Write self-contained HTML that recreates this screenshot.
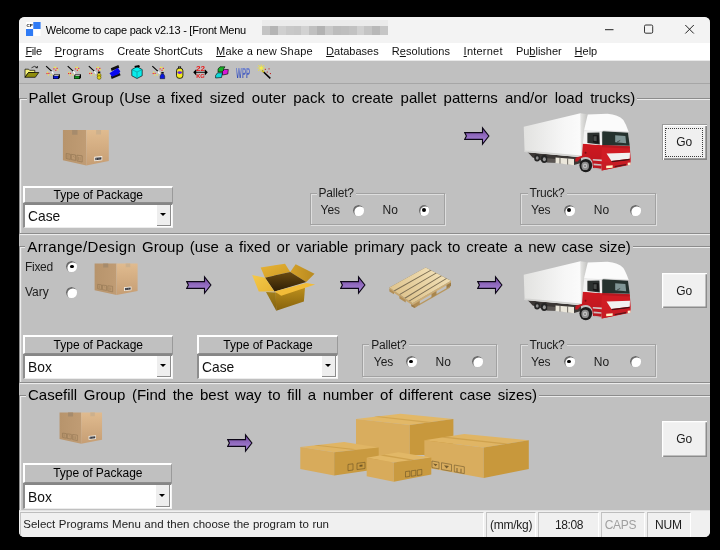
<!DOCTYPE html><html><head><meta charset="utf-8"><title>Welcome to cape pack v2.13</title><style>
*{box-sizing:border-box;margin:0;padding:0}
html,body{width:720px;height:550px;overflow:hidden;background:#000}
body{font-family:"Liberation Sans",sans-serif;color:#000;position:relative}
#win{will-change:transform;position:absolute;left:19px;top:16.8px;width:690.6px;height:519.5px;background:#c0c0c0;border-radius:5.5px;overflow:hidden}
.abs{position:absolute}
#title{left:0;top:0;width:691px;height:26px;background:#f3f3f3}
#menu{left:0;top:26px;width:691px;height:18px;background:#fff}
#tool{left:0;top:43.2px;width:691px;height:23.9px;background:#c0c0c0;border-top:1.6px solid #e9e9e9;border-bottom:1px solid #a6a6a6}
.t{position:absolute;white-space:nowrap;line-height:1}
.mi{font-size:11px;top:29.4px;color:#111}
.mi u{text-decoration:underline;text-underline-offset:1px}
.hd{font-size:15px;background:#c0c0c0;padding:0 2px 0 2px}
.frame{position:absolute;border:1px solid #a2a2a2;box-shadow:inset 1px 1px 0 #dedede, 1px 1px 0 #dedede}
.fm{border-color:#8c8c8c;box-shadow:inset 1.2px 1.1px 0 #ececec, 1px 1.1px 0 #ececec}
.btn{position:absolute;background:#c0c0c0;border-top:2px solid #fff;border-left:2px solid #fff;border-right:1px solid #9a9a9a;border-bottom:1px solid #8c8c8c;font-size:12px;text-align:center}
.combo{position:absolute;background:#fff;border-top:2px solid #868686;border-left:2px solid #8e8e8e;border-right:1px solid #f4f4f4;border-bottom:1px solid #ececec}
.combo .tx{position:absolute;left:3px;font-size:15px;line-height:1;transform:scaleX(0.92);transform-origin:0 0;color:#111}
.combo .dd{position:absolute;right:1px;top:0;bottom:1px;width:14px;background:#eee;border-right:1px solid #8c8c8c;border-bottom:1px solid #8c8c8c}
.combo .dd:after{content:"";position:absolute;left:3px;top:42%;border-left:3.3px solid transparent;border-right:3.3px solid transparent;border-top:3.5px solid #000}
.lb{font-size:12px;color:#1c1c1c}
.radio{position:absolute;width:10.6px;height:10.6px;border-radius:50%;background:#fff;box-shadow:inset 1.4px 1.4px 0.6px #6c6c6c}
.radio.on:after{content:"";position:absolute;left:3.2px;top:3.3px;width:4px;height:3.8px;border-radius:50%;background:#000}
.go{position:absolute;background:#f0f0f0;box-shadow:inset 1.2px 1.2px 0 #fff,inset -1.5px -1.5px 0 #8c8c8c;font-size:12px;text-align:center;color:#1c1c1c}
.go.f{box-shadow:inset 1px 1px 0 #9a9a9a,inset 2px 2px 0 #fff,inset -1.7px -1.7px 0 #858585}
.sp{position:absolute;top:495px;height:25px;border-top:1px solid #bdbdbd;border-left:1px solid #c4c4c4;border-right:1.2px solid #fff}
</style></head><body><div id="win">
<div id="title" class="abs"></div><div id="menu" class="abs"></div><div id="tool" class="abs"></div>
<svg class="abs" style="left:7.200px;top:5px" width="14.600" height="14" viewBox="0 0 16 16" preserveAspectRatio="none"><rect x="0" y="0" width="8" height="8" fill="#fff"/><rect x="8" y="0" width="8" height="8" fill="#2f7bf5"/><rect x="0" y="8" width="8" height="8" fill="#2f7bf5"/><rect x="8" y="8" width="8" height="8" fill="#fff"/><text x="0.5" y="5.5" font-size="5" font-weight="bold" font-family="Liberation Sans, sans-serif" fill="#000">CP</text></svg>
<div class="t" style="left:26.8px;top:7.5px;font-size:11px;letter-spacing:-0.25px">Welcome to cape pack v2.13 - [Front Menu</div>
<div class="abs" style="left:243.0px;top:8.900px;width:8.2px;height:8.800px;background:#c4c4c4"></div>
<div class="abs" style="left:243.0px;top:2.600px;width:8.2px;height:6.300px;background:#ebebeb"></div>
<div class="abs" style="left:250.9px;top:8.900px;width:8.2px;height:8.800px;background:#b4b4b4"></div>
<div class="abs" style="left:250.9px;top:2.600px;width:8.2px;height:6.300px;background:#ebebeb"></div>
<div class="abs" style="left:258.8px;top:8.900px;width:8.2px;height:8.800px;background:#cfcfcf"></div>
<div class="abs" style="left:258.8px;top:2.600px;width:8.2px;height:6.300px;background:#ebebeb"></div>
<div class="abs" style="left:266.6px;top:8.900px;width:8.2px;height:8.800px;background:#c8c8c8"></div>
<div class="abs" style="left:266.6px;top:2.600px;width:8.2px;height:6.300px;background:#ebebeb"></div>
<div class="abs" style="left:274.5px;top:8.900px;width:8.2px;height:8.800px;background:#c6c6c6"></div>
<div class="abs" style="left:274.5px;top:2.600px;width:8.2px;height:6.300px;background:#ebebeb"></div>
<div class="abs" style="left:282.4px;top:8.900px;width:8.2px;height:8.800px;background:#d2d2d2"></div>
<div class="abs" style="left:282.4px;top:2.600px;width:8.2px;height:6.300px;background:#ebebeb"></div>
<div class="abs" style="left:290.2px;top:8.900px;width:8.2px;height:8.800px;background:#c0c0c0"></div>
<div class="abs" style="left:290.2px;top:2.600px;width:8.2px;height:6.300px;background:#ebebeb"></div>
<div class="abs" style="left:298.1px;top:8.900px;width:8.2px;height:8.800px;background:#b2b2b2"></div>
<div class="abs" style="left:298.1px;top:2.600px;width:8.2px;height:6.300px;background:#ebebeb"></div>
<div class="abs" style="left:306.0px;top:8.900px;width:8.2px;height:8.800px;background:#c8c8c8"></div>
<div class="abs" style="left:306.0px;top:2.600px;width:8.2px;height:6.300px;background:#ebebeb"></div>
<div class="abs" style="left:313.9px;top:8.900px;width:8.2px;height:8.800px;background:#bcbcbc"></div>
<div class="abs" style="left:313.9px;top:2.600px;width:8.2px;height:6.300px;background:#ebebeb"></div>
<div class="abs" style="left:321.8px;top:8.900px;width:8.2px;height:8.800px;background:#bebebe"></div>
<div class="abs" style="left:321.8px;top:2.600px;width:8.2px;height:6.300px;background:#ebebeb"></div>
<div class="abs" style="left:329.6px;top:8.900px;width:8.2px;height:8.800px;background:#c2c2c2"></div>
<div class="abs" style="left:329.6px;top:2.600px;width:8.2px;height:6.300px;background:#ebebeb"></div>
<div class="abs" style="left:337.5px;top:8.900px;width:8.2px;height:8.800px;background:#d0d0d0"></div>
<div class="abs" style="left:337.5px;top:2.600px;width:8.2px;height:6.300px;background:#ebebeb"></div>
<div class="abs" style="left:345.4px;top:8.900px;width:8.2px;height:8.800px;background:#c4c4c4"></div>
<div class="abs" style="left:345.4px;top:2.600px;width:8.2px;height:6.300px;background:#ebebeb"></div>
<div class="abs" style="left:353.2px;top:8.900px;width:8.2px;height:8.800px;background:#b8b8b8"></div>
<div class="abs" style="left:353.2px;top:2.600px;width:8.2px;height:6.300px;background:#ebebeb"></div>
<div class="abs" style="left:361.1px;top:8.900px;width:8.2px;height:8.800px;background:#c6c6c6"></div>
<div class="abs" style="left:361.1px;top:2.600px;width:8.2px;height:6.300px;background:#ebebeb"></div>
<svg class="abs" style="left:580px;top:0" width="111" height="26" viewBox="0 0 111 26"><path d="M6 12.700h8.500" stroke="#222" stroke-width="1" fill="none"/><rect x="45.500" y="8" width="8.200" height="8.200" rx="1.300" fill="none" stroke="#333" stroke-width="1"/><path d="M86.300 8l8.500 8.500M94.800 8L86.300 16.500" stroke="#222" stroke-width="1" fill="none"/></svg>
<div class="t mi" style="left:6.5px;letter-spacing:-0.4px"><u>F</u>ile</div>
<div class="t mi" style="left:35.7px;letter-spacing:0.22px"><u>P</u>rograms</div>
<div class="t mi" style="left:98.2px;letter-spacing:0.04px">Create ShortCuts</div>
<div class="t mi" style="left:197.1px;letter-spacing:0.15px"><u>M</u>ake a new Shape</div>
<div class="t mi" style="left:307.1px;letter-spacing:0px"><u>D</u>atabases</div>
<div class="t mi" style="left:372.7px;letter-spacing:0.08px">R<u>e</u>solutions</div>
<div class="t mi" style="left:444.6px;letter-spacing:0.22px"><u>I</u>nternet</div>
<div class="t mi" style="left:496.9px;letter-spacing:0px">Pu<u>b</u>lisher</div>
<div class="t mi" style="left:555.6px;letter-spacing:0px"><u>H</u>elp</div>
<svg class="abs" style="left:1px;top:45px" width="260" height="22" viewBox="20 62 260 22" font-family="Liberation Sans, sans-serif">
<g stroke="#000" stroke-width="0.700" stroke-linejoin="round"><path d="M25 77.300V69.200H28.600L29.600 70.300H34.800V72.500H28.500Z" fill="#f6f27c"/><path d="M25 77.300L28.500 72.500H38.800L35.300 77.300Z" fill="#8e8c0c"/><path d="M31.500 67.800Q34.500 65 37.200 67.600M37.400 67.800L35.600 67.700M37.400 67.800L37.500 66" fill="none"/></g>
<path d="M46.1 66.100L52.1 71.600" stroke="#000" stroke-width="1.100"/><path d="M51.6 71.200L53.4 73.700" stroke="#fff" stroke-width="1.200"/><g fill="#f03030"><rect x="53.3" y="68.3" width="1.200" height="1.200"/><rect x="55.2" y="69.7" width="1.200" height="1.200"/><rect x="56.5" y="67.8" width="1.200" height="1.200"/><rect x="46.4" y="72.9" width="1.200" height="1.200"/><rect x="48.3" y="72.8" width="1.200" height="1.200"/></g><g fill="#f4e840"><rect x="55.2" y="66.8" width="1.200" height="1.200"/><rect x="57.0" y="69.2" width="1.200" height="1.200"/><rect x="53.8" y="66.7" width="1.200" height="1.200"/><rect x="47.8" y="74.3" width="1.200" height="1.200"/><rect x="50.6" y="74.3" width="1.200" height="1.200"/><rect x="46.9" y="71.7" width="1.200" height="1.200"/></g><path d="M53 75.800L54.5 74.300H59.9V77.700L58.6 79.100H53Z" fill="#000"/><path d="M53.5 76.300H58.2V78.600H53.5Z" fill="#0818e0"/><path d="M53.9 75.700L54.8 74.800H59.2L58.3 75.700Z" fill="#f4f4f4"/>
<path d="M67.7 66.100L73.7 71.600" stroke="#000" stroke-width="1.100"/><path d="M73.2 71.200L75.0 73.700" stroke="#fff" stroke-width="1.200"/><g fill="#f03030"><rect x="74.9" y="68.3" width="1.200" height="1.200"/><rect x="76.8" y="69.7" width="1.200" height="1.200"/><rect x="78.1" y="67.8" width="1.200" height="1.200"/><rect x="68.0" y="72.9" width="1.200" height="1.200"/><rect x="69.9" y="72.8" width="1.200" height="1.200"/></g><g fill="#f4e840"><rect x="76.8" y="66.8" width="1.200" height="1.200"/><rect x="78.6" y="69.2" width="1.200" height="1.200"/><rect x="75.4" y="66.7" width="1.200" height="1.200"/><rect x="69.4" y="74.3" width="1.200" height="1.200"/><rect x="72.2" y="74.3" width="1.200" height="1.200"/><rect x="68.5" y="71.7" width="1.200" height="1.200"/></g><path d="M74.1 75.800L75.6 74.300H81.0V77.700L79.69999999999999 79.100H74.1Z" fill="#000"/><path d="M74.6 76.300H79.3V78.600H74.6Z" fill="#109820"/><path d="M75.0 75.700L75.89999999999999 74.800H80.3L79.39999999999999 75.700Z" fill="#f4f4f4"/>
<path d="M88.8 66.100L94.8 71.600" stroke="#000" stroke-width="1.100"/><path d="M94.3 71.200L96.1 73.700" stroke="#fff" stroke-width="1.200"/><g fill="#f03030"><rect x="96.0" y="68.3" width="1.200" height="1.200"/><rect x="97.9" y="69.7" width="1.200" height="1.200"/><rect x="99.2" y="67.8" width="1.200" height="1.200"/><rect x="89.1" y="72.9" width="1.200" height="1.200"/><rect x="91.0" y="72.8" width="1.200" height="1.200"/></g><g fill="#f4e840"><rect x="97.9" y="66.8" width="1.200" height="1.200"/><rect x="99.7" y="69.2" width="1.200" height="1.200"/><rect x="96.5" y="66.7" width="1.200" height="1.200"/><rect x="90.5" y="74.3" width="1.200" height="1.200"/><rect x="93.3" y="74.3" width="1.200" height="1.200"/><rect x="89.6" y="71.7" width="1.200" height="1.200"/></g><rect x="97.900" y="71.500" width="2.400" height="1.500" fill="#111"/><g stroke="#3a3400" stroke-width="0.500"><circle cx="99.100" cy="75.200" r="1.900" fill="#e4d410"/><circle cx="99.100" cy="77.500" r="1.900" fill="#e4d410"/></g>
<path d="M110.800 68.300L118.400 65.100L119.300 67.700L111.600 71Z" fill="#111"/><path d="M110.800 76.300L119.700 73.100L120.600 75.200L111.700 78.900Z" fill="#111"/><path d="M109.500 73.300L117.750 67.800L120.300 71.200L118.800 74L112 76.800Z" fill="#0808f0"/>
<g stroke="#101010" stroke-width="0.700" stroke-linejoin="round"><path d="M137 66.600L142.200 69.600V75.750L137 78.500L131.800 75.750V69.600Z" fill="#08ecec"/></g><path d="M131.800 69.600L137 72L142.200 69.600M137 72V78.500" fill="none" stroke="#0a9a9a" stroke-width="0.700"/><path d="M134.300 66.100L139.100 65L140 66.900L135.200 67.600Z" fill="#000"/>
<path d="M152.3 66.100L158.3 71.600" stroke="#000" stroke-width="1.100"/><path d="M157.8 71.200L159.6 73.700" stroke="#fff" stroke-width="1.200"/><g fill="#f03030"><rect x="159.5" y="68.3" width="1.200" height="1.200"/><rect x="161.4" y="69.7" width="1.200" height="1.200"/><rect x="162.7" y="67.8" width="1.200" height="1.200"/><rect x="152.6" y="72.9" width="1.200" height="1.200"/><rect x="154.5" y="72.8" width="1.200" height="1.200"/></g><g fill="#f4e840"><rect x="161.4" y="66.8" width="1.200" height="1.200"/><rect x="163.2" y="69.2" width="1.200" height="1.200"/><rect x="160.0" y="66.7" width="1.200" height="1.200"/><rect x="154.0" y="74.3" width="1.200" height="1.200"/><rect x="156.8" y="74.3" width="1.200" height="1.200"/><rect x="153.1" y="71.7" width="1.200" height="1.200"/></g><path d="M161.300 72.100H163.700V73.600H161.300Z" fill="#111"/><path d="M161.500 73.800H163.400L164.700 76V78.700H160.100V76Z" fill="#0818e0" stroke="#111" stroke-width="0.500"/>
<rect x="178.100" y="66.300" width="3" height="1.800" fill="#181818"/><rect x="179.200" y="66.800" width="0.900" height="0.900" fill="#eee"/><g stroke="#000" stroke-width="0.800"><rect x="176.500" y="68.200" width="6.400" height="10.100" rx="2.600" fill="#f4ec20"/></g><ellipse cx="179.700" cy="72.600" rx="2.400" ry="1.400" fill="#6024e0"/>
<text x="200.500" y="71" font-size="6.800" font-weight="bold" fill="#e81818" text-anchor="middle" textLength="9" lengthAdjust="spacingAndGlyphs">22</text><text x="200.500" y="78.300" font-size="6" font-weight="bold" fill="#e81818" text-anchor="middle" textLength="8.500" lengthAdjust="spacingAndGlyphs">KG</text><path d="M195 72.300H206" stroke="#000" stroke-width="0.900"/><path d="M193.200 72.300L196.200 69.200V75.400ZM207.800 72.300L204.800 69.200V75.400Z" fill="#000"/>
<g stroke="#000" stroke-width="0.600" stroke-linejoin="round"><path d="M218 69L220 66.800H225L223.500 69V72H218Z" fill="#18b028"/><path d="M222.500 71.500L224.300 69.500H228.300L227.800 74L222.500 75Z" fill="#d818d8"/><path d="M215.600 75.500L217.500 72.800H222.500L221.500 77.500L215.600 78Z" fill="#10d8d8"/></g>
<defs><linearGradient id="gw" x1="0" y1="0" x2="0" y2="1"><stop offset="0" stop-color="#8c9cd8"/><stop offset="1" stop-color="#1c38b0"/></linearGradient></defs><text x="243.100" y="78" font-size="15" font-weight="bold" fill="url(#gw)" text-anchor="middle" textLength="14" lengthAdjust="spacingAndGlyphs">WPP</text>
<path d="M262.300 70.800L270.300 78.400" stroke="#000" stroke-width="1.500"/><path d="M262.300 70.800L263.800 72.200" stroke="#e8d820" stroke-width="1.500"/><g stroke="#f0e430" stroke-width="0.800"><path d="M261.200 64.500V71.500M257.500 68H265M258.200 65L264.200 71M264.200 65L258.200 71"/></g><circle cx="261.200" cy="68" r="1.600" fill="#f4ec50"/><g fill="#c02828"><rect x="264.800" y="68.800" width="1.100" height="1.100"/><rect x="268.500" y="68.300" width="1.100" height="1.100"/><rect x="266.700" y="71.500" width="1.100" height="1.100"/><rect x="269.900" y="73" width="1.100" height="1.100"/></g>
</svg>
<div class="frame fm" style="left:-0.3px;top:80.6px;width:720px;height:136.8px"></div>
<div class="frame fm" style="left:-0.3px;top:229.2px;width:720px;height:137.1px"></div>
<div class="frame fm" style="left:-0.3px;top:377.8px;width:720px;height:137.1px"></div>
<div class="t hd" style="left:7.5px;top:73.100px;word-spacing:3px"><span style="word-spacing:1.600px">Pallet Group (Use a fixed</span> sized outer pack to create pallet patterns and/or load trucks)</div>
<div class="t hd" style="left:6.300px;top:221.700px;word-spacing:1.750px"><span style="letter-spacing:0.330px">Arrange/Design</span> Group (use a fixed or variable primary pack to create a new case size)</div>
<div class="t hd" style="left:7px;top:370.300px;word-spacing:2.36px">Casefill Group (Find the best way to fill a number of different case sizes)</div>
<div class="btn" style="left:3.8px;top:169.3px;width:150px;height:17px;line-height:14.7px">Type of Package</div>
<div class="combo" style="left:3.8px;top:186.3px;width:150px;height:24.5px"><span class="tx" style="top:2.9px">Case</span><span class="dd"></span></div>
<div class="btn" style="left:3.8px;top:318.2px;width:150px;height:19px;line-height:16.7px">Type of Package</div>
<div class="combo" style="left:3.8px;top:337.2px;width:150px;height:24.6px"><span class="tx" style="top:3px">Box</span><span class="dd"></span></div>
<div class="btn" style="left:178px;top:318.2px;width:141px;height:19px;line-height:16.7px">Type of Package</div>
<div class="combo" style="left:178px;top:337.2px;width:141px;height:24.6px"><span class="tx" style="top:3px">Case</span><span class="dd"></span></div>
<div class="btn" style="left:3.6px;top:446.3px;width:149.5px;height:19.4px;line-height:17.099999999999998px">Type of Package</div>
<div class="combo" style="left:3.6px;top:465.7px;width:149.5px;height:26.6px"><span class="tx" style="top:4.7px">Box</span><span class="dd"></span></div>
<div class="frame" style="left:290.8px;top:175.8px;width:135.2px;height:32px"></div>
<div class="t lb" style="left:297.5px;top:169.6px;background:#c0c0c0;padding:0 2px;letter-spacing:-0.2px">Pallet?</div>
<div class="t lb" style="left:301.5px;top:187.4px;letter-spacing:0px">Yes</div>
<div class="radio" style="left:334.45px;top:188.1px"></div>
<div class="t lb" style="left:363.5px;top:187.4px;letter-spacing:0px">No</div>
<div class="radio on" style="left:399.7px;top:188.1px"></div>
<div class="frame" style="left:501.3px;top:175.8px;width:136.2px;height:32px"></div>
<div class="t lb" style="left:508.5px;top:169.6px;background:#c0c0c0;padding:0 2px;letter-spacing:-0.2px">Truck?</div>
<div class="t lb" style="left:512px;top:187.4px;letter-spacing:0px">Yes</div>
<div class="radio on" style="left:545.2px;top:188.1px"></div>
<div class="t lb" style="left:574.75px;top:187.4px;letter-spacing:0px">No</div>
<div class="radio" style="left:611.45px;top:188.1px"></div>
<div class="frame" style="left:342.8px;top:326.90000000000003px;width:135.2px;height:32.9px"></div>
<div class="t lb" style="left:350.25px;top:321.6px;background:#c0c0c0;padding:0 2px;letter-spacing:-0.2px">Pallet?</div>
<div class="t lb" style="left:354.75px;top:339.2px;letter-spacing:0px">Yes</div>
<div class="radio on" style="left:386.95px;top:339.35px"></div>
<div class="t lb" style="left:416.5px;top:339.2px;letter-spacing:0px">No</div>
<div class="radio" style="left:453.2px;top:339.35px"></div>
<div class="frame" style="left:501.3px;top:326.90000000000003px;width:136.2px;height:32.9px"></div>
<div class="t lb" style="left:508.5px;top:321.6px;background:#c0c0c0;padding:0 2px;letter-spacing:-0.2px">Truck?</div>
<div class="t lb" style="left:512px;top:339.2px;letter-spacing:0px">Yes</div>
<div class="radio on" style="left:545.2px;top:339.35px"></div>
<div class="t lb" style="left:574.75px;top:339.2px;letter-spacing:0px">No</div>
<div class="radio" style="left:611.45px;top:339.35px"></div>
<div class="t lb" style="left:6px;top:243.9px;letter-spacing:-0.3px">Fixed</div>
<div class="radio on" style="left:47.45px;top:244.35px"></div>
<div class="t lb" style="left:6px;top:269.09999999999997px;letter-spacing:0px">Vary</div>
<div class="radio" style="left:47.45px;top:270.1px"></div>
<div class="go f" style="left:642.8px;top:107.2px;width:44.9px;height:35.6px;line-height:37.5px">Go</div>
<div class="go" style="left:642.8px;top:255.9px;width:44.9px;height:35.6px;line-height:37.5px">Go</div>
<div class="go" style="left:642.8px;top:404.2px;width:44.9px;height:36.1px;line-height:37.5px">Go</div>
<div class="abs" style="left:646.2px;top:110.600px;width:38.200px;height:29px;border:1px dotted #3c3c3c"></div>
<svg width="0" height="0" style="position:absolute"><defs>
<linearGradient id="ga" x1="0" y1="0" x2="0" y2="1"><stop offset="0" stop-color="#73489f"/><stop offset="1" stop-color="#b08fe0"/></linearGradient>
<linearGradient id="gbr" x1="0" y1="0" x2="0" y2="1"><stop offset="0" stop-color="#e0bb8f"/><stop offset="1" stop-color="#c69e74"/></linearGradient>
<linearGradient id="gbl" x1="0" y1="0" x2="1" y2="0"><stop offset="0" stop-color="#b7946c"/><stop offset="1" stop-color="#c09c74"/></linearGradient>
<linearGradient id="gtr" x1="0" y1="0" x2="1" y2="0"><stop offset="0" stop-color="#e2e2e0"/><stop offset="0.7" stop-color="#f6f6f6"/><stop offset="1" stop-color="#fbfbfb"/></linearGradient>
<linearGradient id="gtf" x1="0" y1="0" x2="1" y2="0"><stop offset="0" stop-color="#e6e6e4"/><stop offset="1" stop-color="#c4c4c2"/></linearGradient>
<linearGradient id="gred" x1="0" y1="0" x2="0" y2="1"><stop offset="0" stop-color="#d01820"/><stop offset="1" stop-color="#b81820"/></linearGradient>
</defs></svg>
<svg class="abs" style="left:38.98px;top:108.02px" width="56.06" height="45.09" viewBox="0 0 684 550" preserveAspectRatio="none"><path d="M60 62H345V495L60 430Z" fill="url(#gbl)"/><path d="M345 62H620V440L345 495Z" fill="url(#gbr)"/><path d="M172 62H238V118H172Z" fill="#a68b6c"/><path d="M465 62H525V115H465Z" fill="#ccb08d"/><g fill="none" stroke="#77603f" stroke-width="8" opacity="0.600"><path d="M100 348L150 356V420L100 408Z"/><path d="M162 358L215 366V432L162 422Z"/><path d="M232 368L295 376V452L232 438Z"/></g><path d="M122 365V400M185 380L200 395M250 390V430M270 392V432" stroke="#77603f" stroke-width="7" opacity="0.500"/><path d="M443 387L540 378V430L443 441Z" fill="#f4f0e8"/><path d="M455 400L530 392V420L455 429Z" fill="#3a3a40"/><path d="M470 398V428M500 395V424" stroke="#aaa" stroke-width="5"/></svg>
<svg class="abs" style="left:444.60px;top:109.25px" width="28" height="20" viewBox="0 0 28 20"><path d="M0.700 6.600H18.500V1.800L24.900 10L18.500 18.200V13.400H0.700L2.400 10Z" fill="url(#ga)" stroke="#0c0616" stroke-width="1.100" stroke-linejoin="miter"/></svg>
<svg class="abs" style="left:496px;top:88px" width="130" height="80" viewBox="0 0 130 80"><g transform="translate(3,3) scale(0.12727)"><path d="M75 345L495 385V432L440 447L300 428H230L115 388Z" fill="#3b3735"/><ellipse cx="150" cy="392" rx="23" ry="28" fill="#262626"/><ellipse cx="151" cy="393" rx="11" ry="14" fill="#8e8e8e"/><ellipse cx="206" cy="401" rx="26" ry="32" fill="#242424"/><ellipse cx="207" cy="402" rx="12" ry="16" fill="#9a9a9a"/><path d="M230 395L295 400V430L230 424Z" fill="#5a5552"/><path d="M295 388L440 400V449L295 432Z" fill="#ebe7db"/><path d="M330 391V437M390 396V444" stroke="#4a4640" stroke-width="6"/><path d="M488 42L545 50L520 385H490Z" fill="url(#gtf)"/><path d="M45 148L490 42L495 387L52 345Z" fill="url(#gtr)"/><path d="M52 333L495 374V387L52 345Z" fill="#d4d4d2"/></g><g transform="translate(60,3) scale(0.12727)"><ellipse cx="85" cy="452" rx="50" ry="52" fill="#1c1c1c"/><ellipse cx="80" cy="455" rx="30" ry="33" fill="#8c8c8c"/><ellipse cx="79" cy="455" rx="17" ry="19" fill="#c0c0c0"/><ellipse cx="79" cy="455" rx="7" ry="8" fill="#7c7c7c"/><path d="M62 278L212 290L216 400L206 482L142 472L135 420Q118 385 85 385Q45 385 22 420L0 420L5 390L55 375Z" fill="url(#gred)"/><path d="M212 290L430 300L438 400L432 442L210 492L206 400Z" fill="#d01c24"/><path d="M212 290L430 300L431 318L213 308Z" fill="#b81820"/><path d="M140 400L210 405V418L140 412Z" fill="#cfc6c6"/><path d="M146 436L208 441V454L146 449Z" fill="#c8bebe"/><path d="M152 470L206 478V488L152 480Z" fill="#bdb3b3"/><path d="M248 358L432 352L430 398L286 416Z" fill="#f1f1f1"/><path d="M286 416L430 398L428 411L292 427Z" fill="#4c1014"/><path d="M210 425L290 430L436 410L434 445L210 492Z" fill="#c81c24"/><path d="M245 453L296 450V470L245 473Z" fill="#fff4c4"/><path d="M414 431L436 428V445L414 449Z" fill="#fff0d0"/><path d="M312 455L400 440V450L312 466Z" fill="#5a1418"/><path d="M72 176L208 184L213 292L62 280Z" fill="#f3f3f3"/><path d="M97 194L192 193L195 286L97 275Z" fill="#2b302e"/><path d="M141 214H186V276L141 270Z" fill="#151515"/><path d="M146 222H170V262L146 258Z" fill="#4a4e4c"/><path d="M214 182L416 194L430 297L214 291Z" fill="#25322e"/><path d="M316 214L396 220L402 276L316 270Z" fill="#7f9595"/><path d="M330 268L355 255" stroke="#1a2220" stroke-width="5"/><path d="M100 52L255 46Q340 52 380 95Q402 130 422 188L226 178L206 186L70 178Z" fill="#fbfbfb"/><path d="M70 178L206 186L226 178L422 188" fill="none" stroke="#d8d8d8" stroke-width="4"/><circle cx="83" cy="352" r="8" fill="#7a1014"/></g></svg>
<svg class="abs" style="left:71.39px;top:242.24px" width="52.52" height="40.01" viewBox="0 0 684 550" preserveAspectRatio="none"><path d="M60 62H345V495L60 430Z" fill="url(#gbl)"/><path d="M345 62H620V440L345 495Z" fill="url(#gbr)"/><path d="M172 62H238V118H172Z" fill="#a68b6c"/><path d="M465 62H525V115H465Z" fill="#ccb08d"/><g fill="none" stroke="#77603f" stroke-width="8" opacity="0.600"><path d="M100 348L150 356V420L100 408Z"/><path d="M162 358L215 366V432L162 422Z"/><path d="M232 368L295 376V452L232 438Z"/></g><path d="M122 365V400M185 380L200 395M250 390V430M270 392V432" stroke="#77603f" stroke-width="7" opacity="0.500"/><path d="M443 387L540 378V430L443 441Z" fill="#f4f0e8"/><path d="M455 400L530 392V420L455 429Z" fill="#3a3a40"/><path d="M470 398V428M500 395V424" stroke="#aaa" stroke-width="5"/></svg>
<svg class="abs" style="left:167.00px;top:257.60px" width="28" height="20" viewBox="0 0 28 20"><path d="M0.700 6.600H18.500V1.800L24.900 10L18.500 18.200V13.400H0.700L2.400 10Z" fill="url(#ga)" stroke="#0c0616" stroke-width="1.100" stroke-linejoin="miter"/></svg>
<svg class="abs" style="left:320.80px;top:257.60px" width="28" height="20" viewBox="0 0 28 20"><path d="M0.700 6.600H18.500V1.800L24.900 10L18.500 18.200V13.400H0.700L2.400 10Z" fill="url(#ga)" stroke="#0c0616" stroke-width="1.100" stroke-linejoin="miter"/></svg>
<svg class="abs" style="left:458.20px;top:257.60px" width="28" height="20" viewBox="0 0 28 20"><path d="M0.700 6.600H18.500V1.800L24.900 10L18.500 18.200V13.400H0.700L2.400 10Z" fill="url(#ga)" stroke="#0c0616" stroke-width="1.100" stroke-linejoin="miter"/></svg>
<svg class="abs" style="left:496px;top:235.9px" width="130" height="80" viewBox="0 0 130 80"><g transform="translate(3,3) scale(0.12727)"><path d="M75 345L495 385V432L440 447L300 428H230L115 388Z" fill="#3b3735"/><ellipse cx="150" cy="392" rx="23" ry="28" fill="#262626"/><ellipse cx="151" cy="393" rx="11" ry="14" fill="#8e8e8e"/><ellipse cx="206" cy="401" rx="26" ry="32" fill="#242424"/><ellipse cx="207" cy="402" rx="12" ry="16" fill="#9a9a9a"/><path d="M230 395L295 400V430L230 424Z" fill="#5a5552"/><path d="M295 388L440 400V449L295 432Z" fill="#ebe7db"/><path d="M330 391V437M390 396V444" stroke="#4a4640" stroke-width="6"/><path d="M488 42L545 50L520 385H490Z" fill="url(#gtf)"/><path d="M45 148L490 42L495 387L52 345Z" fill="url(#gtr)"/><path d="M52 333L495 374V387L52 345Z" fill="#d4d4d2"/></g><g transform="translate(60,3) scale(0.12727)"><ellipse cx="85" cy="452" rx="50" ry="52" fill="#1c1c1c"/><ellipse cx="80" cy="455" rx="30" ry="33" fill="#8c8c8c"/><ellipse cx="79" cy="455" rx="17" ry="19" fill="#c0c0c0"/><ellipse cx="79" cy="455" rx="7" ry="8" fill="#7c7c7c"/><path d="M62 278L212 290L216 400L206 482L142 472L135 420Q118 385 85 385Q45 385 22 420L0 420L5 390L55 375Z" fill="url(#gred)"/><path d="M212 290L430 300L438 400L432 442L210 492L206 400Z" fill="#d01c24"/><path d="M212 290L430 300L431 318L213 308Z" fill="#b81820"/><path d="M140 400L210 405V418L140 412Z" fill="#cfc6c6"/><path d="M146 436L208 441V454L146 449Z" fill="#c8bebe"/><path d="M152 470L206 478V488L152 480Z" fill="#bdb3b3"/><path d="M248 358L432 352L430 398L286 416Z" fill="#f1f1f1"/><path d="M286 416L430 398L428 411L292 427Z" fill="#4c1014"/><path d="M210 425L290 430L436 410L434 445L210 492Z" fill="#c81c24"/><path d="M245 453L296 450V470L245 473Z" fill="#fff4c4"/><path d="M414 431L436 428V445L414 449Z" fill="#fff0d0"/><path d="M312 455L400 440V450L312 466Z" fill="#5a1418"/><path d="M72 176L208 184L213 292L62 280Z" fill="#f3f3f3"/><path d="M97 194L192 193L195 286L97 275Z" fill="#2b302e"/><path d="M141 214H186V276L141 270Z" fill="#151515"/><path d="M146 222H170V262L146 258Z" fill="#4a4e4c"/><path d="M214 182L416 194L430 297L214 291Z" fill="#25322e"/><path d="M316 214L396 220L402 276L316 270Z" fill="#7f9595"/><path d="M330 268L355 255" stroke="#1a2220" stroke-width="5"/><path d="M100 52L255 46Q340 52 380 95Q402 130 422 188L226 178L206 186L70 178Z" fill="#fbfbfb"/><path d="M70 178L206 186L226 178L422 188" fill="none" stroke="#d8d8d8" stroke-width="4"/><circle cx="83" cy="352" r="8" fill="#7a1014"/></g></svg>
<svg class="abs" style="left:36.45px;top:390.53px" width="51.91" height="39.63" viewBox="0 0 684 550" preserveAspectRatio="none"><path d="M60 62H345V495L60 430Z" fill="url(#gbl)"/><path d="M345 62H620V440L345 495Z" fill="url(#gbr)"/><path d="M172 62H238V118H172Z" fill="#a68b6c"/><path d="M465 62H525V115H465Z" fill="#ccb08d"/><g fill="none" stroke="#77603f" stroke-width="8" opacity="0.600"><path d="M100 348L150 356V420L100 408Z"/><path d="M162 358L215 366V432L162 422Z"/><path d="M232 368L295 376V452L232 438Z"/></g><path d="M122 365V400M185 380L200 395M250 390V430M270 392V432" stroke="#77603f" stroke-width="7" opacity="0.500"/><path d="M443 387L540 378V430L443 441Z" fill="#f4f0e8"/><path d="M455 400L530 392V420L455 429Z" fill="#3a3a40"/><path d="M470 398V428M500 395V424" stroke="#aaa" stroke-width="5"/></svg>
<svg class="abs" style="left:207.50px;top:415.90px" width="28" height="20" viewBox="0 0 28 20"><path d="M0.700 6.600H18.500V1.800L24.900 10L18.500 18.200V13.400H0.700L2.400 10Z" fill="url(#ga)" stroke="#0c0616" stroke-width="1.100" stroke-linejoin="miter"/></svg>
<svg class="abs" style="left:221px;top:238px" width="90" height="65" viewBox="0 0 720 520">
<defs>
<linearGradient id="ob1" x1="0" y1="0" x2="1" y2="1"><stop offset="0" stop-color="#e6b236"/><stop offset="1" stop-color="#cf9c24"/></linearGradient>
<linearGradient id="ob2" x1="0" y1="0" x2="1" y2="0"><stop offset="0" stop-color="#d4a028"/><stop offset="1" stop-color="#b88a20"/></linearGradient>
<linearGradient id="ob3" x1="0" y1="0" x2="1" y2="1"><stop offset="0" stop-color="#f4c84a"/><stop offset="1" stop-color="#e8b432"/></linearGradient>
<linearGradient id="ob4" x1="0" y1="0" x2="0" y2="1"><stop offset="0" stop-color="#6a4a10"/><stop offset="1" stop-color="#2e1e06"/></linearGradient>
<linearGradient id="ob5" x1="0" y1="0" x2="0" y2="1"><stop offset="0" stop-color="#bb8e1c"/><stop offset="1" stop-color="#86620c"/></linearGradient>
<linearGradient id="ob6" x1="0" y1="0" x2="0" y2="1"><stop offset="0" stop-color="#a27e18"/><stop offset="1" stop-color="#846210"/></linearGradient>
</defs>
<path d="M165 100L360 70L402 136L200 181Z" fill="url(#ob1)"/>
<path d="M402 136L445 74L596 150L530 216Z" fill="url(#ob2)"/>
<path d="M200 181L402 136L530 216L276 291Z" fill="url(#ob4)"/>
<path d="M208 296L286 300L290 446Z" fill="url(#ob6)"/>
<path d="M284 300L520 262L511 372L290 446Z" fill="url(#ob5)"/>
<path d="M97 160L200 181L276 291L150 291Z" fill="url(#ob3)"/>
<path d="M276 291L530 224L601 235L330 326Z" fill="#f2bc38"/>
</svg><svg class="abs" style="left:356px;top:238px" width="90" height="65" viewBox="0 0 720 520">
<defs><linearGradient id="pw" x1="0" y1="0" x2="1" y2="0"><stop offset="0" stop-color="#dfc48e"/><stop offset="1" stop-color="#f0deb4"/></linearGradient></defs>
<!-- bottom boards / blocks right side -->
<path d="M352 392L600 250V262L352 404Z" fill="#b8975e"/>
<path d="M300 385L608 205V222L300 402Z" fill="#cfae74"/>
<path d="M300 400L358 366V398L318 424L290 410Z" fill="#b08c54"/>
<path d="M452 312L492 288V318L452 342Z" fill="#a8864e"/>
<path d="M572 240L608 220V248L572 268Z" fill="#9c7c48"/>
<!-- front-left side -->
<path d="M115 260L300 385V402L115 277Z" fill="#c8a66c"/>
<path d="M115 272L152 296V314L115 292Z" fill="#b08e58"/>
<path d="M195 326L246 360V380L195 348Z" fill="#b08e58"/>
<path d="M290 392L318 410V424L290 408Z" fill="#9a7a48"/>
<!-- top -->
<path d="M115 260L405 100L608 205L300 385Z" fill="#7d6f54"/>
<path d="M115 260L405 100L443 120L150 284Z" fill="url(#pw)"/>
<path d="M158 289L450 124L486 142L193 313Z" fill="url(#pw)"/>
<path d="M201 318L493 146L528 164L236 342Z" fill="url(#pw)"/>
<path d="M244 347L535 168L568 185L270 365Z" fill="url(#pw)"/>
<path d="M278 370L575 189L608 205L300 385Z" fill="url(#pw)"/>
</svg><svg class="abs" style="left:271px;top:388px" width="250" height="85" viewBox="290 405 250 85">
<g>
<!-- box B big -->
<path d="M356 418.900L400.400 413.700L453.400 418.900L409.800 425.100Z" fill="#e2b867"/>
<path d="M374 416.800L426.500 422.700L431.500 422L379 416.200Z" fill="#d2a652"/>
<path d="M356 418.900L409.800 425.100V462H356Z" fill="#d9ad5e"/>
<path d="M409.800 425.100L453.400 418.900V455H409.800Z" fill="#c8983c"/>
<!-- box A left -->
<path d="M300.300 446.900L344.200 442L378.700 447.400L334.200 452.300Z" fill="#e0b564"/>
<path d="M314 445.400L352 449.800L356.500 449.300L318.500 444.900Z" fill="#cfa24e"/>
<path d="M300.300 446.900L334.200 452.300V475.400L300.300 469.100Z" fill="#d8ab5b"/>
<path d="M334.200 452.300L378.700 447.400V469.100L334.200 475.400Z" fill="#c99a40"/>
<!-- box D right -->
<path d="M424.400 440.200L464.200 433.900L528.800 440.200L483.700 447.400Z" fill="#e0b564"/>
<path d="M441 437.600L503 444.300L508 443.500L446 436.800Z" fill="#cfa24e"/>
<path d="M424.400 440.200L483.700 447.400V478.100L424.400 467.300Z" fill="#d9ad5e"/>
<path d="M483.700 447.400L528.800 440.200V469.100L483.700 478.100Z" fill="#c8983c"/>
<!-- box C centre front -->
<path d="M366.700 457.700L398.300 452.300L431.300 457.400L393.800 462.400Z" fill="#e2b867"/>
<path d="M380 455.400L409.500 460.300L414 459.700L384.500 454.700Z" fill="#cfa24e"/>
<path d="M366.700 457.700L393.800 462.400V481.700L366.700 476.300Z" fill="#d8ab5b"/>
<path d="M393.800 462.400L431.300 457.400V474.500L393.800 481.700Z" fill="#c99a40"/>
<!-- handling icons -->
<g fill="none" stroke="#4a3a1c" stroke-width="0.600" opacity="0.750">
<path d="M348 464.400l5 -0.600v6.200l-5 0.700zM357 463.300l8 -1v6.200l-8 1.100z"/>
<path d="M405.500 471.600l4.300 -0.600v5.400l-4.300 0.700zM411.300 470.800l4.500 -0.600v5.400l-4.500 0.700zM417.300 470l4.500 -0.600v5.400l-4.500 0.700z"/>
<path d="M432 461l7 1.300v6.600l-7 -1.300zM441.500 462.700l10 1.800v6.800l-10 -1.800zM454.300 465l10 1.800v6.800l-10 -1.800z"/>
</g>
<g fill="#4a3a1c" opacity="0.700"><path d="M359.500 465l3 -0.400v1.800l-3 0.400z"/><path d="M444 465.200l5 0.900l-2.500 2.500z"/><path d="M433 463.500l4.500 0.800l-2 2z"/><path d="M457 468v4M461 468.700v4" stroke="#3c2e14" stroke-width="0.800"/></g>
</g></svg>
<div class="abs" style="left:0;top:493px;width:691px;height:27px;background:#f0f0f0;border-top:1px solid #e2e2e2"></div>
<div class="sp" style="left:0.500px;width:464px"></div>
<div class="t" style="left:4.300px;top:502.100px;font-size:11.5px;color:#1c1c1c;word-spacing:0.3px">Select Programs Menu and then choose the program to run</div>
<div class="sp" style="left:466.8px;width:50.5px"></div>
<div class="t" style="left:471px;top:501.700px;font-size:12px;color:#1c1c1c;letter-spacing:-0.25px">(mm/kg)</div>
<div class="sp" style="left:519.3px;width:60.5px"></div>
<div class="t" style="left:536px;top:501.700px;font-size:12px;color:#1c1c1c;letter-spacing:-0.4px">18:08</div>
<div class="sp" style="left:581.5px;width:44px"></div>
<div class="t" style="left:585.7px;top:501.700px;font-size:12px;color:#a0a0a0;letter-spacing:-0.3px">CAPS</div>
<div class="sp" style="left:627.5px;width:44.5px"></div>
<div class="t" style="left:636px;top:501.700px;font-size:12px;color:#1c1c1c;letter-spacing:-0.2px">NUM</div>
</div></body></html>
